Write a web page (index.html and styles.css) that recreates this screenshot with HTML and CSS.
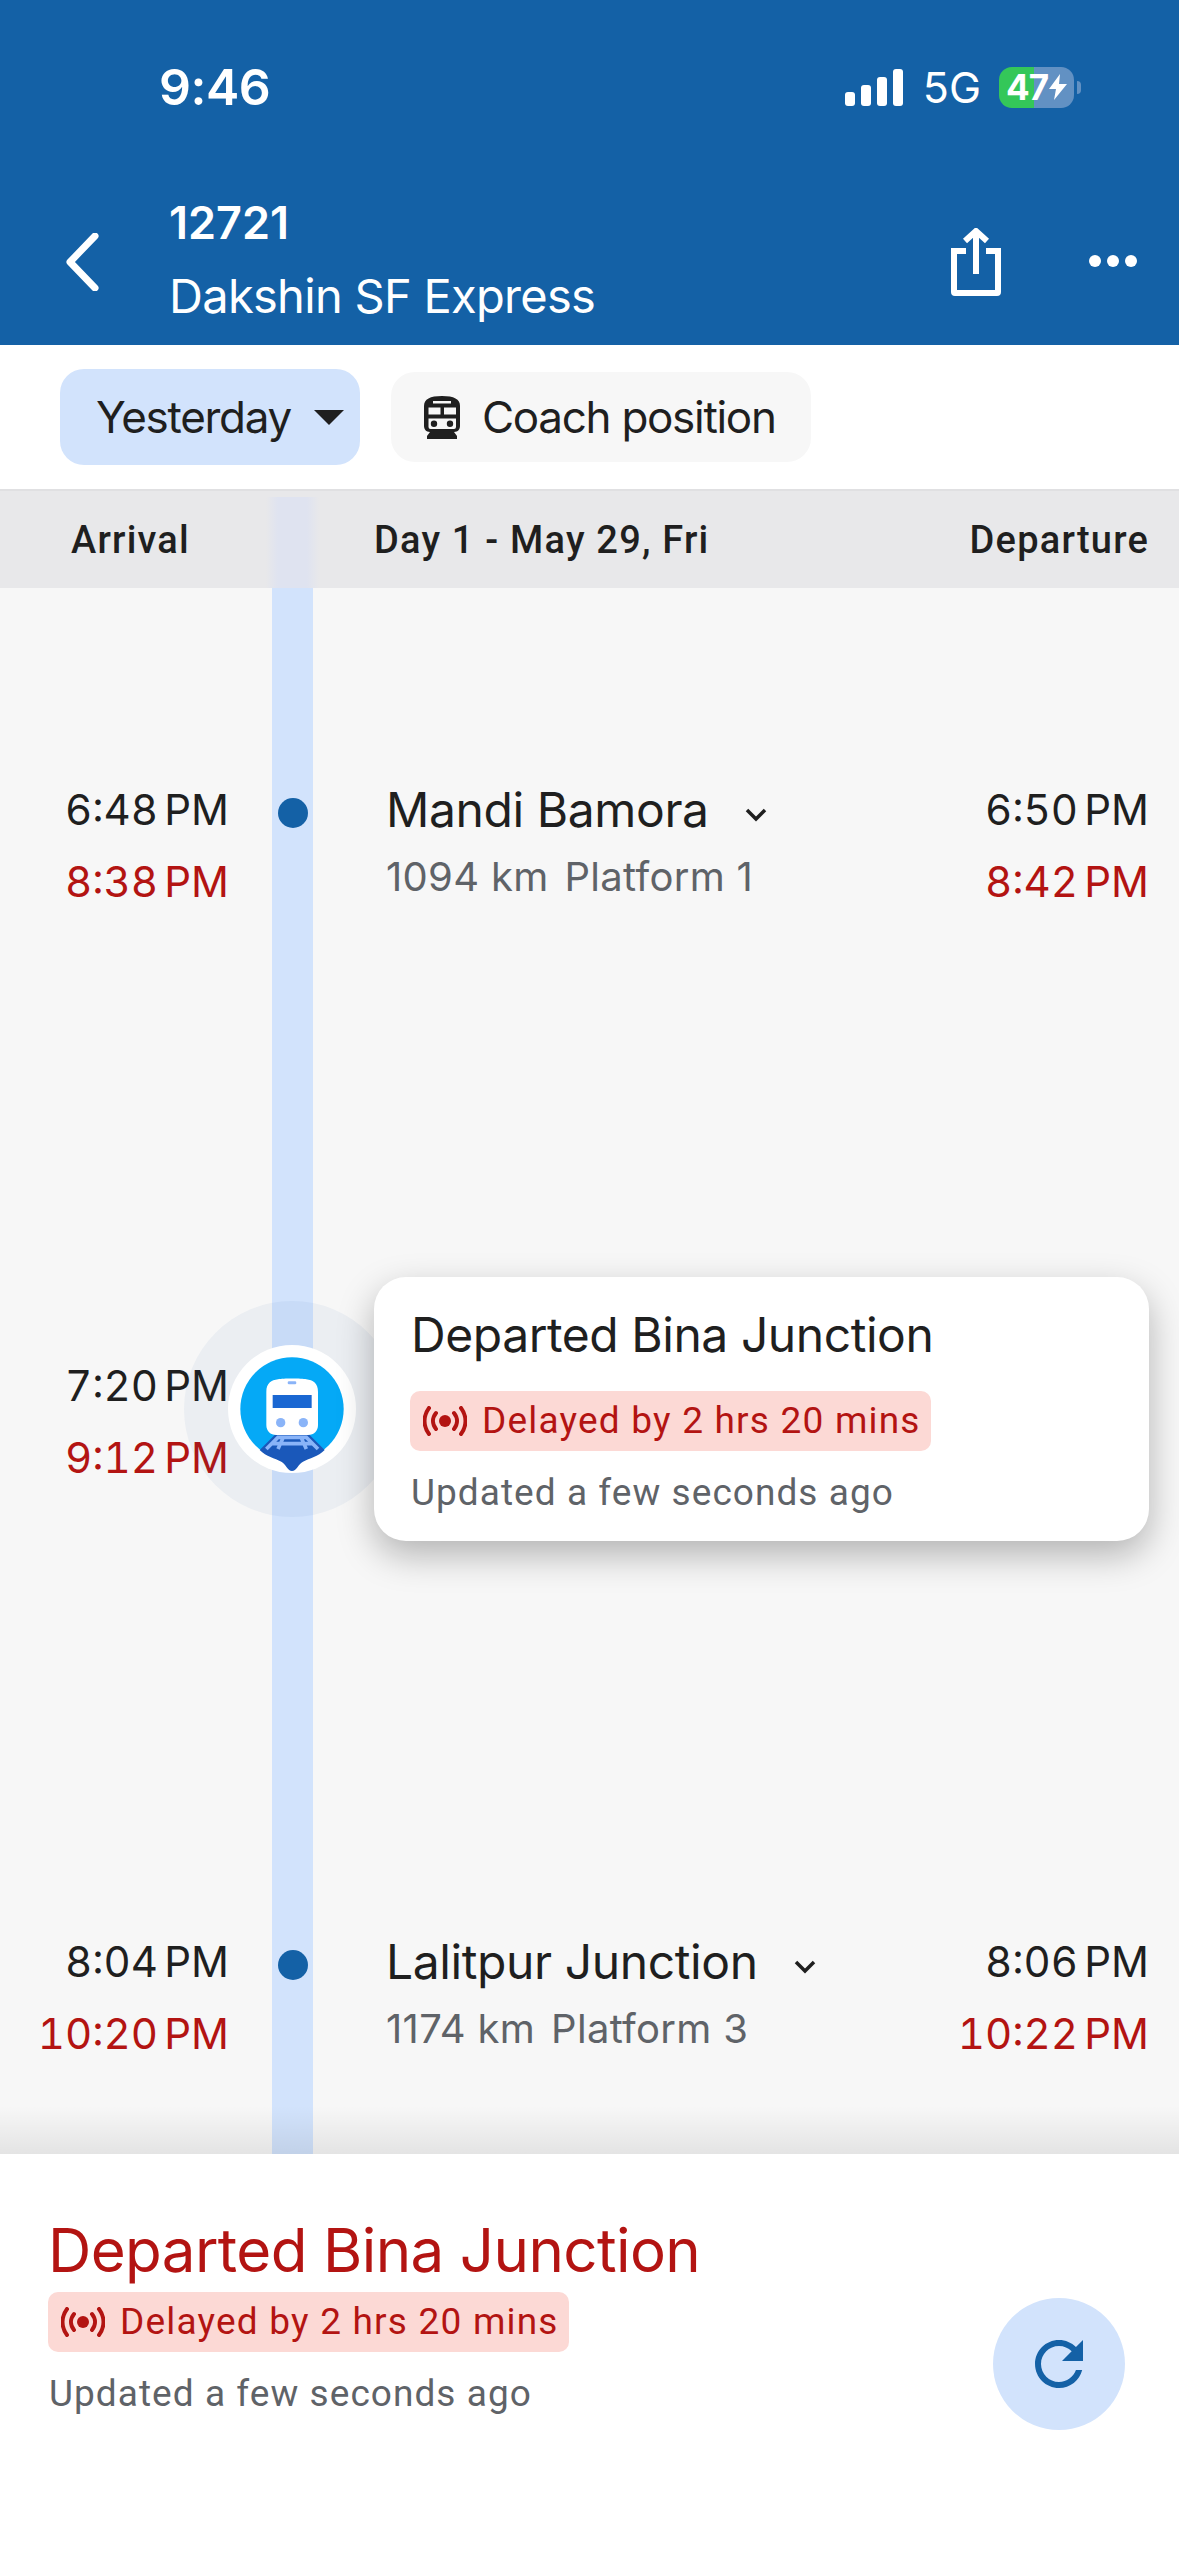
FILE: index.html
```html
<!DOCTYPE html>
<html>
    <head>
        <meta charset="UTF-8">
        <title>Dakshin SF Express</title>
        <link rel="stylesheet" href="styles.css">
    </head>
    <body>
        <div class="screen">
            <div class="top">
                <div class="status">
                    <span class="clock">9:46</span>
                    <div class="status-right">
                        <svg class="signal" width="58" height="37" viewBox="0 0 58 37">
                            <rect x="0" y="23" width="10" height="14" rx="3"/>
                            <rect x="16" y="16" width="10" height="21" rx="3"/>
                            <rect x="32" y="8" width="10" height="29" rx="3"/>
                            <rect x="48" y="0" width="10" height="37" rx="3"/>
                        </svg>
                        <span class="net">5G</span>
                        <div class="battery">
                            <span class="battery-num">47</span>
                            <svg class="bolt" width="18" height="26" viewBox="0 0 18 26"><path d="M11 0 L0 15 H7 L5 26 L18 10 H10 Z"/></svg>
                        </div>
                        <span class="battery-nub"></span>
                    </div>
                </div>
                <div class="titlebar">
                    <svg class="back" width="33" height="58" viewBox="0 0 33 58"><path d="M29 3 L4 29 L29 55"/></svg>
                    <div class="train-title">
                        <div class="train-no">12721</div>
                        <div class="train-name">Dakshin SF Express</div>
                    </div>
                    <svg class="share" width="50" height="68" viewBox="0 0 50 68">
                        <path d="M15 23 H3 V64 Q3 65 4 65 H46 Q47 65 47 64 V23 H35"/>
                        <path d="M25 46 V3 M14 13 L25 3 L36 13"/>
                    </svg>
                    <div class="more"><i></i><i></i><i></i></div>
                </div>
            </div>

            <div class="tools">
                <div class="chip chip-day">Yesterday<span class="caret"></span></div>
                <div class="chip chip-coach">
                    <svg width="36" height="43" viewBox="0 0 36 43">
                        <path d="M18 0 C6 0 0 3 0 10 V30 C0 33 2 36 6 36 L3 40 V43 H33 V40 L30 36 C34 36 36 33 36 30 V10 C36 3 30 0 18 0 Z M9 5 H27 V7.5 H9 Z M4.5 11.5 H16.5 V18.5 H4.5 Z M20 11.5 H32 V18.5 H20 Z M4.5 22.5 H32 V31 Q32 33 30 33 H6.5 Q4.5 33 4.5 31 Z M10 31 A3.2 3.2 0 1 0 10 24.6 A3.2 3.2 0 0 0 10 31 Z M26 31 A3.2 3.2 0 1 0 26 24.6 A3.2 3.2 0 0 0 26 31 Z" fill-rule="evenodd"/>
                    </svg>
                    Coach position
                </div>
            </div>

            <div class="columns">
                <span class="col-arr">Arrival</span>
                <span class="col-day">Day 1 - May 29, Fri</span>
                <span class="col-dep">Departure</span>
            </div>

            <div class="timeline">
                <div class="rail"></div>

                <div class="row">
                    <div class="times times-arr">
                        <div>6:48 PM</div>
                        <div class="late">8:38 PM</div>
                    </div>
                    <div class="rail-cell"><span class="dot"></span></div>
                    <div class="station">
                        <div class="station-name">Mandi Bamora
                            <svg class="drop" width="22" height="14" viewBox="0 0 22 14"><path d="M2 2 L11 11 L20 2"/></svg>
                        </div>
                        <div class="station-sub"><span>1094 km</span><span>Platform 1</span></div>
                    </div>
                    <div class="times times-dep">
                        <div>6:50 PM</div>
                        <div class="late">8:42 PM</div>
                    </div>
                </div>

                <div class="row">
                    <div class="times times-arr">
                        <div>7:20 PM</div>
                        <div class="late">9:12 PM</div>
                    </div>
                    <div class="rail-cell">
                        <div class="halo"></div>
                        <svg class="marker" width="128" height="128" viewBox="0 0 384 384">
                            <circle cx="192" cy="192" r="192" fill="#fff"/>
                            <circle cx="192" cy="192" r="155" fill="#05a9f6"/>
                            <path d="M95 315 L140 270 H245 L290 315 C270 335 245 340 225 350 C212 356 205 378 192 378 C180 378 172 356 160 350 C140 340 115 335 95 315 Z" fill="#1a58ba"/>
                            <path d="M115 312 L150 277 H235 L270 312 M132 296 H253 M166 277 L150 312 M219 277 L235 312" fill="none" stroke="#8ab4f8" stroke-width="11"/>
                            <path d="M115 140 C115 115 130 105 150 103 C165 100 220 100 235 103 C255 105 270 115 270 140 V240 C270 258 258 270 240 270 H145 C127 270 115 258 115 240 Z" fill="#fff"/>
                            <rect x="134" y="150" width="117" height="39" fill="#1a67d2"/>
                            <rect x="179" y="109" width="26" height="9" rx="4" fill="#8ab4f8"/>
                            <circle cx="158" cy="233" r="14" fill="#8ab4f8"/>
                            <circle cx="226" cy="233" r="14" fill="#8ab4f8"/>
                        </svg>
                    </div>
                    <div class="card">
                        <div class="card-title">Departed Bina Junction</div>
                        <div class="badge">
                            <svg class="live" width="44" height="30" viewBox="0 0 44 30">
                                <circle cx="22" cy="15" r="6" class="live-dot"/>
                                <path d="M13 7 C9 12 9 18 13 23 M31 7 C35 12 35 18 31 23 M6 2 C0 10 0 20 6 28 M38 2 C44 10 44 20 38 28"/>
                            </svg>
                            Delayed by 2 hrs 20 mins
                        </div>
                        <div class="updated">Updated a few seconds ago</div>
                    </div>
                </div>

                <div class="row">
                    <div class="times times-arr">
                        <div>8:04 PM</div>
                        <div class="late">10:20 PM</div>
                    </div>
                    <div class="rail-cell"><span class="dot"></span></div>
                    <div class="station">
                        <div class="station-name">Lalitpur Junction
                            <svg class="drop" width="22" height="14" viewBox="0 0 22 14"><path d="M2 2 L11 11 L20 2"/></svg>
                        </div>
                        <div class="station-sub"><span>1174 km</span><span>Platform 3</span></div>
                    </div>
                    <div class="times times-dep">
                        <div>8:06 PM</div>
                        <div class="late">10:22 PM</div>
                    </div>
                </div>
            </div>

            <div class="panel">
                <div class="panel-info">
                    <div class="panel-title">Departed Bina Junction</div>
                    <div class="badge">
                        <svg class="live" width="44" height="30" viewBox="0 0 44 30">
                            <circle cx="22" cy="15" r="6" class="live-dot"/>
                            <path d="M13 7 C9 12 9 18 13 23 M31 7 C35 12 35 18 31 23 M6 2 C0 10 0 20 6 28 M38 2 C44 10 44 20 38 28"/>
                        </svg>
                        Delayed by 2 hrs 20 mins
                    </div>
                    <div class="updated">Updated a few seconds ago</div>
                </div>
                <div class="refresh">
                    <svg width="48" height="48" viewBox="4 4 16 16">
                        <path d="M17.65 6.35C16.2 4.9 14.21 4 12 4c-4.42 0-7.99 3.58-7.99 8s3.57 8 7.99 8c3.73 0 6.84-2.55 7.73-6h-2.08c-.82 2.33-3.04 4-5.65 4-3.31 0-6-2.69-6-6s2.69-6 6-6c1.66 0 3.14.69 4.22 1.78L13 11h7V4l-2.35 2.35z" fill="#1461a6"/>
                    </svg>
                </div>
            </div>
        </div>
    </body>
</html>
```

FILE: styles.css
```css
*{
    box-sizing: border-box;
}
body{
    margin: 0;
    font-family: "Roboto", "Liberation Sans", sans-serif;
    background: #fff;
}
.screen{
    width: 1179px;
    height: 2556px;
    overflow: hidden;
    display: flex;
    flex-direction: column;
}

/* blue header */
.top{
    height: 345px;
    background: #1461a6;
    color: #fff;
}
.status{
    height: 174px;
    display: flex;
    justify-content: space-between;
    padding: 60px 98px 0 159px;
}
.clock{
    font: 600 50px/54px "Inter", sans-serif;
    letter-spacing: -0.5px;
}
.status-right{
    display: flex;
    height: 54px;
    align-items: center;
}
.signal{
    fill: #fff;
}
.net{
    font: 400 43px/54px "Inter", sans-serif;
    margin-left: 20px;
}
.battery{
    width: 75px;
    height: 41px;
    margin-left: 18px;
    border-radius: 13px;
    background: linear-gradient(90deg, #34c759 35px, #6291c3 35px);
    display: flex;
    align-items: center;
    padding-left: 7px;
}
.battery-num{
    font: 700 35px/41px "Inter", sans-serif;
    letter-spacing: -1px;
}
.bolt{
    fill: #fff;
    margin-left: 1px;
}
.battery-nub{
    width: 4px;
    height: 13px;
    margin-left: 3px;
    border-radius: 0 7px 7px 0;
    background: #6291c3;
}
.titlebar{
    display: flex;
    align-items: flex-start;
    padding-left: 66px;
}
.back{
    margin-top: 59px;
    fill: none;
    stroke: #fff;
    stroke-width: 7;
    stroke-linecap: round;
    stroke-linejoin: round;
}
.train-title{
    margin-left: 70px;
    flex: 1;
    margin-top: 22px;
}
.train-no{
    font: 600 45px/54px "Inter", sans-serif;
}
.train-name{
    font: 400 47px/64px "Inter", sans-serif;
    letter-spacing: -0.7px;
    margin-top: 14px;
}
.share{
    margin-top: 54px;
    fill: none;
    stroke: #fff;
    stroke-width: 6;
}
.more{
    display: flex;
    gap: 6px;
    margin: 81px 42px 0 88px;
}
.more i{
    width: 12px;
    height: 12px;
    border-radius: 50%;
    background: #fff;
}

/* chips */
.tools{
    height: 144px;
    display: flex;
    align-items: center;
    padding-left: 60px;
    gap: 31px;
    background: #fff;
    font: 400 44px/64px "Inter", sans-serif;
    letter-spacing: -1.3px;
    color: #1f1f1f;
}
.chip{
    display: flex;
    align-items: center;
    border-radius: 24px;
}
.chip-day{
    width: 300px;
    height: 96px;
    background: #d2e3fc;
    padding-left: 36px;
}
.caret{
    margin-left: 23px;
    border-left: 15px solid transparent;
    border-right: 15px solid transparent;
    border-top: 15px solid #1f1f1f;
}
.chip-coach{
    width: 420px;
    height: 90px;
    background: #f7f7f7;
    padding-left: 33px;
}
.chip-coach svg{
    fill: #1f1f1f;
    margin-right: 22px;
}

/* column titles */
.columns{
    height: 99px;
    background: #e8e8ea;
    border-top: 2px solid #e0e0e2;
    display: flex;
    align-items: center;
    position: relative;
    padding: 0 30px 0 71px;
    font-weight: 500;
    font-size: 38px;
    letter-spacing: 1.2px;
    color: #1f1f1f;
}
.columns:before{
    content: "";
    position: absolute;
    left: 266px;
    top: 6px;
    bottom: 0;
    width: 53px;
    background: linear-gradient(90deg, transparent, #dfe3f0 12px, #dfe3f0 41px, transparent);
}
.columns span{
    position: relative;
}
.col-arr{
    width: 303px;
}
.col-day{
    flex: 1;
}

/* timeline */
.timeline{
    flex: 1;
    min-height: 0;
    position: relative;
    background: #f7f7f7;
    padding-top: 186px;
    overflow: hidden;
}
.timeline:after{
    content: "";
    position: absolute;
    left: 0;
    right: 0;
    bottom: 0;
    height: 48px;
    background: linear-gradient(rgba(0,0,0,0), rgba(0,0,0,.08));
}
.rail{
    position: absolute;
    left: 272px;
    top: 0;
    bottom: 0;
    width: 41px;
    background: #d2e3fc;
}
.row{
    height: 576px;
    position: relative;
    display: grid;
    grid-template-columns: 272px 41px 1fr auto;
    padding-right: 30px;
}
.times{
    font: 400 42px/72px "Inter", sans-serif;
    font-variant-numeric: tabular-nums;
    word-spacing: -5px;
    color: #1f1f1f;
    text-align: right;
}
.times-arr{
    padding-right: 43px;
}
.late{
    color: #b31412;
}
.rail-cell{
    position: relative;
    display: flex;
    justify-content: center;
}
.dot{
    width: 30px;
    height: 30px;
    margin-top: 24px;
    border-radius: 50%;
    background: #1461a6;
}
.halo{
    position: absolute;
    left: -88px;
    top: -49px;
    width: 216px;
    height: 216px;
    border-radius: 50%;
    background: rgba(26,75,160,.05);
}
.marker{
    position: absolute;
    left: -44px;
    top: -5px;
}
.station{
    padding-left: 73px;
}
.station-name{
    font: 400 48px/72px "Inter", sans-serif;
    letter-spacing: -0.4px;
    color: #1f1f1f;
}
.drop{
    margin-left: 23px;
    vertical-align: 5px;
    fill: none;
    stroke: #1f1f1f;
    stroke-width: 3.5;
}
.station-sub{
    display: flex;
    gap: 16px;
    font: 400 40px/62px "Inter", sans-serif;
    letter-spacing: .3px;
    color: #5f6368;
}
.card{
    grid-column: 3 / 5;
    position: relative;
    height: 264px;
    margin: -73px 0 0 61px;
    padding: 30px 0 0 36px;
    background: #fff;
    border-radius: 32px;
    box-shadow: 0 14px 36px rgba(0,0,0,.28);
}
.card-title{
    font: 400 48px/56px "Inter", sans-serif;
    letter-spacing: -0.45px;
    color: #1f1f1f;
    margin-left: 1px;
}
.badge{
    display: inline-flex;
    align-items: center;
    height: 60px;
    padding: 0 10px 0 13px;
    background: #fcd9d5;
    border-radius: 10px;
    font: 400 37px/60px "Roboto", sans-serif;
    letter-spacing: 1.2px;
    color: #b31412;
}
.card .badge{
    margin-top: 28px;
}
.live{
    margin-right: 15px;
    fill: none;
    stroke: #b31412;
    stroke-width: 4;
    stroke-linecap: round;
}
.live-dot{
    fill: #b31412;
    stroke: none;
}
.updated{
    font: 400 37px/44px "Roboto", sans-serif;
    letter-spacing: 1.05px;
    color: #5f6368;
    margin: 20px 0 0 1px;
}

/* bottom panel */
.panel{
    height: 402px;
    flex: none;
    background: #fff;
    position: relative;
    display: flex;
    justify-content: space-between;
    padding: 61px 54px 0 48px;
}
.panel-title{
    font: 400 60px/70px "Inter", sans-serif;
    letter-spacing: -0.6px;
    color: #b31412;
    margin: 0 0 7px 0;
}
.refresh{
    width: 132px;
    height: 132px;
    margin-top: 83px;
    border-radius: 50%;
    background: #d2e3fc;
    display: flex;
    align-items: center;
    justify-content: center;
}
```
